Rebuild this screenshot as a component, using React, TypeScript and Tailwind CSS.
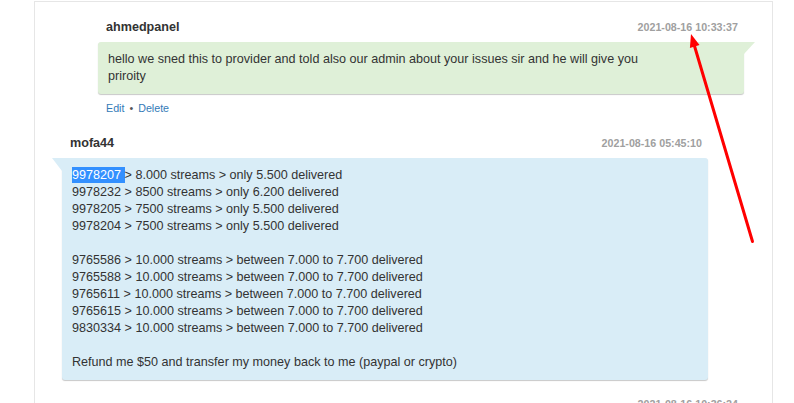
import React from "react";

const font = { fontFamily: '"Liberation Sans", Arial, Helvetica, sans-serif' };

function Header({ name, ts }: { name?: string; ts: string }) {
  return (
    <div className="flex items-baseline justify-between pl-[8px] pr-[6px]">
      <span className="text-[12.6px] leading-[17px] font-bold text-[#333]">{name ?? "\u00a0"}</span>
      <span className="text-[10.7px] font-bold text-[#a0a0a0]">{ts}</span>
    </div>
  );
}

const blueLines: (string | null)[] = [
  "__SEL__",
  "9978232 > 8500 streams > only 6.200 delivered",
  "9978205 > 7500 streams > only 5.500 delivered",
  "9978204 > 7500 streams > only 5.500 delivered",
  null,
  "9765586 > 10.000 streams > between 7.000 to 7.700 delivered",
  "9765588 > 10.000 streams > between 7.000 to 7.700 delivered",
  "9765611 > 10.000 streams > between 7.000 to 7.700 delivered",
  "9765615 > 10.000 streams > between 7.000 to 7.700 delivered",
  "9830334 > 10.000 streams > between 7.000 to 7.700 delivered",
  null,
  "Refund me $50 and transfer my money back to me (paypal or crypto)",
];

export default function App() {
  return (
    <div className="relative w-[794px] h-[403px] overflow-hidden bg-white pt-[1px]" style={font}>
      <div className="ml-[34px] w-[739px] border-t border-l border-r border-[#e6e6e6] pl-[27px] pr-[28px] pt-[17px] h-[500px]">
        {/* Admin message */}
        <div className="pl-[36px] mb-[19px]">
          <Header name="ahmedpanel" ts="2021-08-16 10:33:37" />
          <div className="relative mt-[6px] bg-[#dff0d8] rounded-[3px] rounded-tr-none shadow-[0_1px_1px_rgba(0,0,0,0.22)] pl-[10px] pr-[10px] pt-[9px] pb-[9px] text-[12.6px] leading-[17px] text-[#333]">
            <div className="absolute left-full top-0 w-0 h-0 border-t-[12px] border-t-[#dff0d8] border-r-[11px] border-r-transparent" />
            hello we sned this to provider and told also our admin about your issues sir and he will give you
            <br />
            priroity
          </div>
          <div className="mt-[7px] pl-[8px] text-[10.7px] leading-[15px]">
            <span className="text-[#337ab7]">Edit</span>
            <span className="mx-[5px] text-[#555]">•</span>
            <span className="text-[#337ab7]">Delete</span>
          </div>
        </div>

        {/* User message */}
        <div className="pr-[36px] mb-[16px]">
          <Header name="mofa44" ts="2021-08-16 05:45:10" />
          <div className="relative mt-[6px] bg-[#d9edf7] rounded-[3px] rounded-tl-none shadow-[0_1px_1px_rgba(0,0,0,0.22)] pl-[10px] pr-[10px] pt-[9px] pb-[9px] text-[12.6px] leading-[17px] text-[#333]">
            <div className="absolute right-full top-0 w-0 h-0 border-t-[13px] border-t-[#d9edf7] border-l-[10px] border-l-transparent" />
            {blueLines.map((l, i) =>
              l === null ? (
                <div key={i} className="h-[17px]" />
              ) : l === "__SEL__" ? (
                <div key={i} className="whitespace-pre">
                  <span className="bg-[#3390ff] text-white py-[1px]">9978207 </span>
                  {"> 8.000 streams > only 5.500 delivered"}
                </div>
              ) : (
                <div key={i} className="whitespace-pre">{l}</div>
              )
            )}
          </div>
        </div>

        {/* Next admin message (cut off) */}
        <div className="pl-[36px]">
          <Header ts="2021-08-16 10:36:24" />
        </div>
      </div>

      <svg className="absolute inset-0 pointer-events-none" width="794" height="403" viewBox="0 0 794 403">
        <line x1="752.5" y1="241.5" x2="694.5" y2="46" stroke="#ff0000" strokeWidth="3" strokeLinecap="round" />
        <polygon points="691,34 699.5,45.1 689.9,47.9" fill="#ff0000" />
      </svg>
    </div>
  );
}
